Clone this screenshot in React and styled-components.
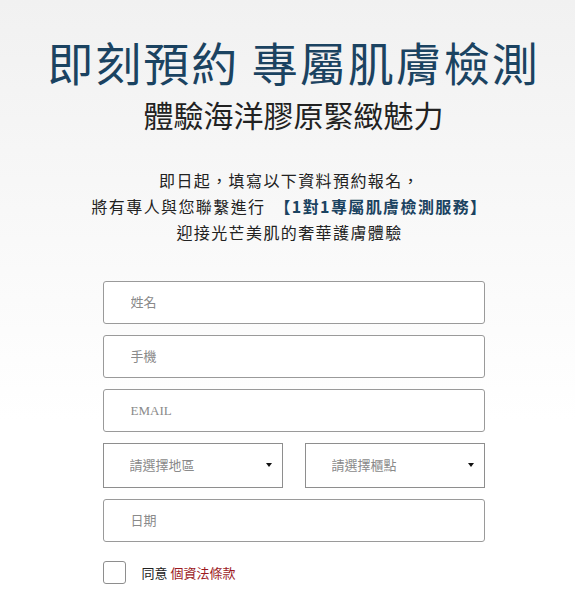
import React from 'react';
import styled, { createGlobalStyle } from 'styled-components';

const GlobalStyle = createGlobalStyle`
  html, body {
    margin: 0;
    padding: 0;
  }
  body {
    background: linear-gradient(180deg, #f1f1f1 0%, #f8f8f8 35%, #ffffff 70%);
    min-height: 600px;
    font-family: "Noto Sans CJK TC", "Noto Sans", sans-serif;
  }
`;

const Page = styled.section`
  box-sizing: border-box;
  width: 575px;
  min-height: 600px;
  padding: 31px 0 0 12px;
  text-align: center;
`;

const Title = styled.h1`
  margin: 0;
  font-size: 46px;
  line-height: 60px;
  font-weight: 400;
  letter-spacing: 2px;
  color: #1b4361;
  white-space: nowrap;
`;

const SubTitle = styled.h2`
  margin: 5px 0 0 0;
  font-size: 30px;
  line-height: 36px;
  font-weight: 400;
  color: #222;
`;

const Intro = styled.p`
  margin: 35px 0 0 0;
  font-size: 16px;
  line-height: 26px;
  color: #222;
  letter-spacing: 1.4px;
  padding-right: 8px;

  strong {
    color: #1b4361;
    font-weight: 700;
    margin-left: 4px;
  }
`;

const Form = styled.form`
  width: 382px;
  margin: 36px auto 0;
  display: flex;
  flex-direction: column;
  gap: 11px;
  text-align: left;
`;

const Field = styled.input`
  box-sizing: border-box;
  width: 100%;
  height: 43px;
  padding: 0 0 0 27px;
  border: 1px solid #9a9a9a;
  border-radius: 3px;
  background: #fff;
  font-family: "Liberation Serif", "Noto Sans CJK TC", serif;
  font-size: 13px;
  color: #333;
  outline: none;

  &::placeholder {
    color: #8a8a8a;
  }
`;

const SelectRow = styled.div`
  display: grid;
  grid-template-columns: 1fr 1fr;
  gap: 22px;
`;

const SelectBox = styled.div`
  position: relative;

  &::after {
    content: '';
    position: absolute;
    right: 11px;
    top: 20px;
    border-left: 3.5px solid transparent;
    border-right: 3.5px solid transparent;
    border-top: 4px solid #111;
    pointer-events: none;
  }
`;

const Select = styled.select`
  box-sizing: border-box;
  width: 100%;
  height: 45px;
  padding: 0 0 0 26px;
  border: 1px solid #8e8e8e;
  border-radius: 0;
  background: #fff;
  appearance: none;
  font-family: "Liberation Serif", "Noto Sans CJK TC", serif;
  font-size: 13px;
  color: #8a8a8a;
  outline: none;
`;

const Agree = styled.label`
  display: flex;
  align-items: center;
  gap: 16px;
  margin-top: 8px;
  font-size: 13px;
  color: #222;

  em {
    font-style: normal;
    color: #9c1a1e;
  }
`;

const Check = styled.span`
  display: inline-block;
  width: 21px;
  height: 21px;
  border: 1px solid #8e8e8e;
  border-radius: 3px;
  background: #fff;
`;

export default function App() {
  return (
    <>
      <GlobalStyle />
      <Page>
        <Title>即刻預約 專屬肌膚檢測</Title>
        <SubTitle>體驗海洋膠原緊緻魅力</SubTitle>
        <Intro>
          即日起，填寫以下資料預約報名，<br />
          將有專人與您聯繫進行 <strong>【1對1專屬肌膚檢測服務】</strong><br />
          迎接光芒美肌的奢華護膚體驗
        </Intro>
        <Form>
          <Field placeholder="姓名" />
          <Field placeholder="手機" />
          <Field placeholder="EMAIL" />
          <SelectRow>
            <SelectBox>
              <Select defaultValue="">
                <option value="">請選擇地區</option>
              </Select>
            </SelectBox>
            <SelectBox>
              <Select defaultValue="">
                <option value="">請選擇櫃點</option>
              </Select>
            </SelectBox>
          </SelectRow>
          <Field placeholder="日期" />
          <Agree>
            <Check />
            <span>同意 <em>個資法條款</em></span>
          </Agree>
        </Form>
      </Page>
    </>
  );
}
